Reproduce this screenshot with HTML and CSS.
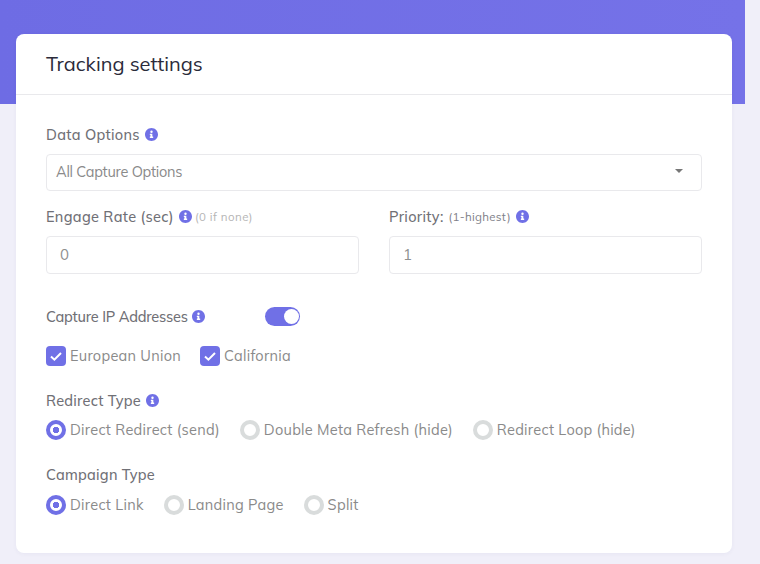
FILE: index.html
```html
<!DOCTYPE html>
<html lang="en">
<head>
    <meta charset="UTF-8">
    <title>Tracking settings</title>
    <link rel="stylesheet" href="styles.css">
</head>
<body>
    <svg class="sprite" width="0" height="0">
        <symbol id="info" viewBox="8 8 496 496">
            <path d="M256 8C119 8 8 119 8 256s111 248 248 248 248-111 248-248S393 8 256 8zm0 100a46 46 0 1 1 0 92 46 46 0 0 1 0-92zm64 268c0 7-5 12-12 12h-104c-7 0-12-5-12-12v-28c0-7 5-12 12-12h12v-60h-12c-7 0-12-5-12-12v-28c0-7 5-12 12-12h72c7 0 12 5 12 12v100h20c7 0 12 5 12 12z"/>
        </symbol>
    </svg>

    <div class="band"></div>

    <div class="card">
        <div class="card-head">
            <h1>Tracking settings</h1>
        </div>
        <form class="card-body">
            <label class="label">Data Options <svg class="info"><use href="#info"/></svg></label>
            <div class="select">
                <span>All Capture Options</span>
                <i class="caret"></i>
            </div>

            <div class="two-col">
                <div>
                    <label class="label">Engage Rate (sec) <svg class="info"><use href="#info"/></svg> <small class="hint">(0 if none)</small></label>
                    <div class="input">0</div>
                </div>
                <div>
                    <label class="label">Priority: <small class="hint hint-dark">(1-highest)</small> <svg class="info"><use href="#info"/></svg></label>
                    <div class="input">1</div>
                </div>
            </div>

            <div class="capture-row">
                <label class="label label-capture">Capture IP Addresses <svg class="info"><use href="#info"/></svg></label>
                <span class="toggle"><i></i></span>
            </div>

            <div class="options checks">
                <span class="opt"><i class="check"><svg viewBox="0 0 20 20"><path d="M5 10.5l3.4 3.2L15 7"/></svg></i>European Union</span>
                <span class="opt"><i class="check"><svg viewBox="0 0 20 20"><path d="M5 10.5l3.4 3.2L15 7"/></svg></i>California</span>
            </div>

            <label class="label label-group">Redirect Type <svg class="info"><use href="#info"/></svg></label>
            <div class="options">
                <span class="opt"><i class="radio on"></i>Direct Redirect (send)</span>
                <span class="opt"><i class="radio"></i>Double Meta Refresh (hide)</span>
                <span class="opt"><i class="radio"></i>Redirect Loop (hide)</span>
            </div>

            <label class="label label-campaign">Campaign Type</label>
            <div class="options options-campaign">
                <span class="opt"><i class="radio on"></i>Direct Link</span>
                <span class="opt"><i class="radio"></i>Landing Page</span>
                <span class="opt"><i class="radio"></i>Split</span>
            </div>
        </form>
    </div>
</body>
</html>
```

FILE: styles.css
```css
html, body {
    margin: 0;
    height: 564px;
    overflow: hidden;
}

body {
    background-color: #f0eff9;
    font-family: "Muli", "Mulish", "Nunito", "Lato", "Noto Sans", sans-serif;
    color: #8a8a8a;
}

.sprite {
    display: block;
}

.band {
    width: 745px;
    height: 104px;
    background: linear-gradient(90deg, #6e6ce4, #7572e8);
}

.card {
    width: 716px;
    height: 519px;
    margin: -70px 0 0 16px;
    background: #fff;
    border-radius: 8px;
    box-shadow: 0 1px 4px rgba(60, 60, 120, 0.05);
}

.card-head {
    height: 61px;
    box-sizing: border-box;
    border-bottom: 1px solid #e9e9ec;
    padding: 17px 30px 0;
}

h1 {
    margin: 0;
    font-size: 20px;
    line-height: 26px;
    font-weight: 400;
    color: #2b2b3a;
}

.card-body {
    padding: 29px 30px 0;
}

.label {
    display: flex;
    align-items: center;
    gap: 5px;
    height: 20px;
    font-size: 14.5px;
    font-weight: 500;
    color: #707076;
    letter-spacing: 0.3px;
    white-space: nowrap;
}

.label-capture {
    gap: 4px;
    letter-spacing: -0.2px;
}

.info {
    width: 13px;
    height: 13px;
    fill: #7070e6;
    flex: none;
}

.hint {
    margin-left: -2px;
    font-size: 11.5px;
    font-weight: 400;
    letter-spacing: 0.45px;
    color: #b5b5b5;
}

.hint-dark {
    margin-left: 0;
    letter-spacing: 0.3px;
    color: #808088;
}

.select, .input {
    box-sizing: border-box;
    border: 1px solid #e9e9ec;
    border-radius: 4px;
    background: #fff;
}

.select {
    display: flex;
    align-items: center;
    justify-content: space-between;
    height: 37px;
    margin-top: 10px;
    padding: 0 18px 2px 9px;
    font-size: 14.5px;
    letter-spacing: -0.25px;
}

.caret {
    width: 0;
    height: 0;
    margin-bottom: 2px;
    border-left: 4px solid transparent;
    border-right: 4px solid transparent;
    border-top: 4px solid #777;
}

.two-col {
    display: grid;
    grid-template-columns: 313px 313px;
    gap: 30px;
    margin-top: 15px;
}

.input {
    height: 38px;
    margin-top: 10px;
    padding-left: 13px;
    line-height: 36px;
    font-size: 15px;
    letter-spacing: 0.8px;
    color: #8f8f8f;
}

.capture-row {
    display: flex;
    align-items: center;
    margin-top: 32px;
    height: 20px;
}

.toggle {
    position: relative;
    display: block;
    width: 35px;
    height: 19px;
    margin-left: 60px;
    border-radius: 10px;
    background-color: #7070e6;
}

.toggle i {
    position: absolute;
    top: 2px;
    right: 1px;
    width: 15px;
    height: 15px;
    border-radius: 50%;
    background: #fff;
}

.options {
    display: flex;
    gap: 20px;
    height: 20px;
    margin-top: 10px;
}

.checks {
    gap: 19px;
    margin-top: 20px;
}

.opt {
    display: flex;
    align-items: center;
    gap: 4px;
    padding-bottom: 1px;
    font-size: 14.5px;
    letter-spacing: 0.27px;
    color: #8a8a8a;
    white-space: nowrap;
}

.check {
    display: block;
    width: 20px;
    height: 20px;
    margin-bottom: -1px;
    border-radius: 4px;
    background-color: #7070e6;
}

.check svg {
    display: block;
    width: 20px;
    height: 20px;
    fill: none;
    stroke: #fff;
    stroke-width: 2;
}

.radio {
    display: block;
    box-sizing: border-box;
    width: 20px;
    height: 20px;
    margin-bottom: -1px;
    border: 4px solid #d9dcdc;
    border-radius: 50%;
    background: #fff;
}

.radio.on {
    border-color: #7070e6;
    background: radial-gradient(circle, #7070e6 0 3px, #fff 3.5px);
}

.label-group {
    margin-top: 24px;
    letter-spacing: 0.25px;
}

.label-campaign {
    margin-top: 24px;
    letter-spacing: 0.25px;
}

.options-campaign {
    margin-top: 11px;
}
```
